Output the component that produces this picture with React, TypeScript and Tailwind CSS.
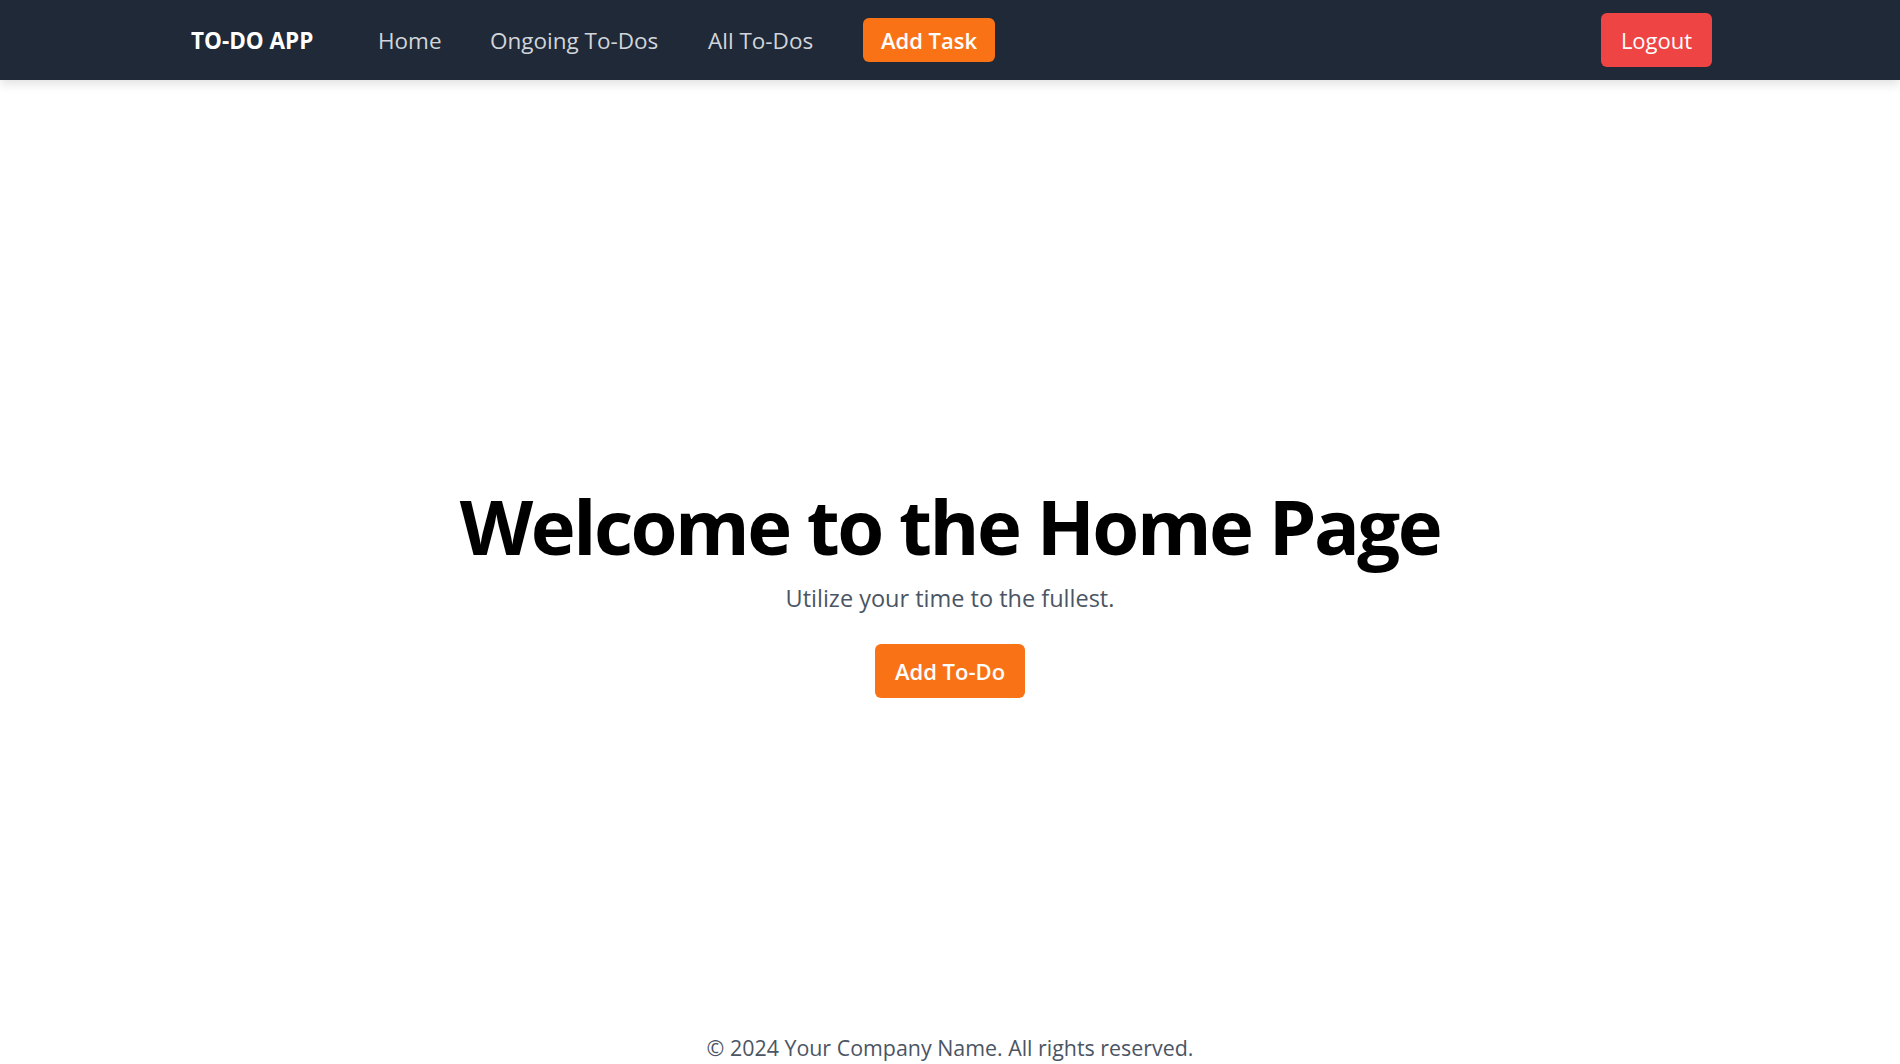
import React from "react";

export default function App() {
  const font = { fontFamily: '"Open Sans", "Noto Sans", Arial, sans-serif' };
  return (
    <div className="h-screen flex flex-col bg-white" style={font}>
      <nav className="relative z-10 h-[80px] shrink-0 bg-[#1f2937] shadow-[0_4px_10px_rgba(0,0,0,0.12)]">
        <div className="h-full pl-[191px] pr-[188px] flex items-center justify-between">
          <div className="flex items-center">
            <span className="w-[187px] pt-[2px] text-[22.5px] font-bold text-white">TO-DO APP</span>
            <a className="w-[112px] pt-[2px] text-[22.5px] text-[#d1d5db]">Home</a>
            <a className="w-[218px] pt-[2px] text-[22.5px] text-[#d1d5db]">Ongoing To-Dos</a>
            <a className="w-[155px] pt-[2px] text-[22.5px] text-[#d1d5db]">All To-Dos</a>
            <button className="w-[132px] h-[44px] rounded-[6px] bg-[#f97316] text-white text-[22px] font-semibold flex items-center justify-center">
              Add Task
            </button>
          </div>
          <button className="w-[111px] h-[54px] rounded-[6px] bg-[#ef4444] text-white text-[22px] flex items-center justify-center">
            Logout
          </button>
        </div>
      </nav>
      <main className="flex-1 flex flex-col items-center justify-center pt-[75px]">
        <h1 className="text-[76px] leading-none font-bold text-black tracking-[-2.5px]">
          Welcome to the Home Page
        </h1>
        <p className="mt-[18px] text-[23.5px] leading-[33px] text-[#4b5563]">
          Utilize your time to the fullest.
        </p>
        <button className="mt-[29px] w-[150px] h-[54px] rounded-[6px] bg-[#f97316] text-white text-[22px] font-semibold flex items-center justify-center">
          Add To-Do
        </button>
      </main>
      <footer className="h-[33px] shrink-0 flex items-center justify-center">
        <p className="text-[21.4px] leading-[33px] text-[#4b5563]">
          © 2024 Your Company Name. All rights reserved.
        </p>
      </footer>
    </div>
  );
}
